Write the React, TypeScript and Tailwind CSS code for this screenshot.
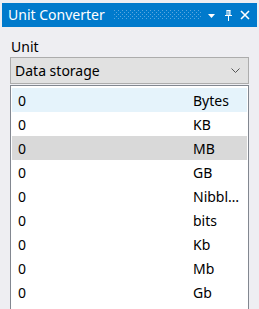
import React from 'react';

const units = ['Bytes', 'KB', 'MB', 'GB', 'Nibbl…', 'bits', 'Kb', 'Mb', 'Gb'];

function PinIcon() {
  return (
    <svg width="7" height="11" viewBox="0 0 7 11" className="block">
      <path d="M1.5 0.5h4M2 0.5v5M5 0.5v5M4 0.5v5M0 5.5h7M3.5 6v5" stroke="white" strokeWidth="1" fill="none" />
    </svg>
  );
}

function CloseIcon() {
  return (
    <svg width="10" height="10" viewBox="0 0 10 10" className="block">
      <path d="M1 1L9 9M9 1L1 9" stroke="white" strokeWidth="1.6" />
    </svg>
  );
}

function Grip() {
  return (
    <svg className="flex-1 ml-[9px] mr-[7px] h-[10px] block">
      <defs>
        <pattern id="grip" width="4" height="4" patternUnits="userSpaceOnUse">
          <rect x="0" y="0" width="1" height="1" fill="#5aa6de" />
          <rect x="2" y="2" width="1" height="1" fill="#5aa6de" />
        </pattern>
      </defs>
      <rect width="100%" height="100%" fill="url(#grip)" />
    </svg>
  );
}

export default function App() {
  return (
    <div
      className="w-[259px] h-[309px] overflow-hidden bg-[#eeeef2] pt-[3px] px-[2px] text-[14px] text-black"
      style={{ fontFamily: '"Noto Sans", "Open Sans", sans-serif' }}
    >
      {/* title bar */}
      <div className="h-[24px] bg-[#007acc] flex items-center pl-[6px] pr-[7px]">
        <span className="text-white leading-none">Unit Converter</span>
        <Grip />
        <svg width="7" height="4" viewBox="0 0 7 4" className="block mr-[10px] mt-[1px]">
          <path d="M0 0h7L3.5 4z" fill="white" />
        </svg>
        <div className="mr-[8px]">
          <PinIcon />
        </div>
        <CloseIcon />
      </div>

      {/* body */}
      <div className="px-[8px] pt-[10px]">
        <div className="h-[20px] leading-[20px] pl-[1px]">Unit</div>
        <div className="h-[27px] border border-[#acacac] bg-[#e1e1e1] flex items-center pl-[4px] pr-[8px]">
          <span className="flex-1 leading-none">Data storage</span>
          <svg width="9" height="5" viewBox="0 0 9 5" className="block">
            <path d="M0.5 0.5L4.5 4.5L8.5 0.5" stroke="#555" strokeWidth="1" fill="none" />
          </svg>
        </div>
        <div className="mt-[1px] border-x border-t border-[#828790] bg-white pt-[2px] px-[1px] h-[230px]">
          {units.map((u, i) => (
            <div
              key={u}
              className={`h-[24px] flex items-center ${
                i === 0 ? 'bg-[#e5f3fb]' : i === 2 ? 'bg-[#d9d9d9]' : ''
              }`}
            >
              <span className="w-[181px] pl-[6px]">0</span>
              <span className="w-[52px] whitespace-nowrap">{u}</span>
            </div>
          ))}
        </div>
      </div>
    </div>
  );
}
